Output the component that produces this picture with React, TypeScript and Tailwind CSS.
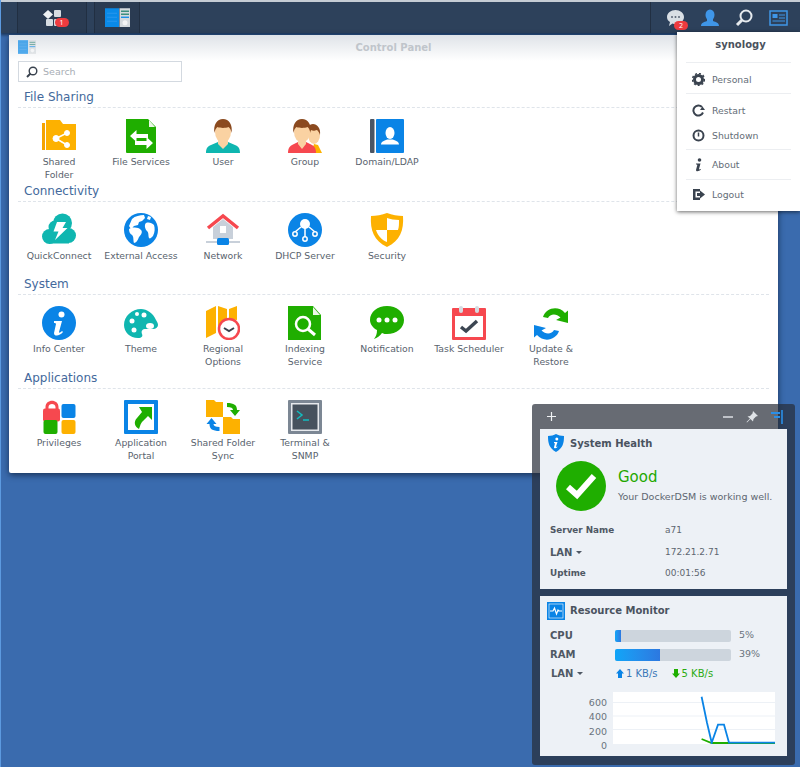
import React from "react";

const G = "#1fae00", O = "#fdb100", B = "#0a84e6", T = "#0fb6b0", R = "#f6484f";

function S({ children, size = 34, box = 34 }: { children: React.ReactNode; size?: number; box?: number }) {
  return <svg width={size} height={size} viewBox={`0 0 ${box} ${box}`} className="block">{children}</svg>;
}

const person = (shirt: string, dx = 0) => (
  <g transform={`translate(${dx} 0)`}>
    <path d="M0 34c0-5 2-7 5-8l7-3h10l7 3c3 1 5 3 5 8z" fill={shirt} />
    <path d="M12 21h10v4l-5 5-5-5z" fill="#fad2a2" />
    <ellipse cx="17" cy="13" rx="8" ry="10.500" fill="#fad2a2" />
    <path d="M8.500 14C7 6 11 0 17 0s10 6 8.500 14c-.5-3-1.500-5-3-6-3 1.200-8 1.200-11 0-1.500 1-2.500 3-3 6z" fill="#8b4a1f" />
  </g>
);

const icons: Record<string, React.ReactNode> = {
  shared: (
    <S>
      <path d="M0 4h3v27H0z" fill="#f5a300" /><path d="M4 1h14l3 4h13v26H4z" fill={O} />
      <g fill="#fff" stroke="#fff"><circle cx="25" cy="14" r="2.500" /><circle cx="25" cy="26" r="2.500" /><circle cx="14" cy="19.500" r="3" /><path d="M14 19.500 25 14M14 19.500 25 26" strokeWidth="1.500" /></g>
    </S>
  ),
  file: (
    <S>
      <path d="M2 0h22l8 8v26H3a1 1 0 0 1-1-1z" fill={G} />
      <path d="M25 1l6 7h-6z" fill="#eaf7e5" />
      <path d="M6 17l6.500-6v4H24v4H12.500v4z" fill="#fff" />
      <path d="M29 24l-6.500-6v4H11v4h11.500v4z" fill="#fff" />
    </S>
  ),
  user: <S>{person(T)}</S>,
  group: (
    <S>
      <g transform="translate(17 4)">
        <ellipse cx="9" cy="12" rx="6" ry="9" fill="#fad2a2" />
        <path d="M2 12C1 5 4 1 8 1s8 4 7 11c-1-3-2-4-3-5-3 1-4 1-6 0-1 1-3 3-4 5z" fill="#8b4a1f" />
        <path d="M6 30l3-9 4 1 4 8z" fill={O} />
      </g>
      <path d="M0 34c0-5 2-7 4-8l6-3h8l6 3c2 1 4 3 4 8z" fill={R} />
      <path d="M10 21h8v4l-4 5-4-5z" fill="#fad2a2" />
      <ellipse cx="14" cy="13" rx="8" ry="10.500" fill="#fad2a2" />
      <path d="M5.500 14C4 6 8 0 14 0s10 6 8.500 14c-.5-3-1.500-5-3-6-3 1.200-8 1.200-11 0-1.500 1-2.500 3-3 6z" fill="#8b4a1f" />
    </S>
  ),
  domain: (
    <S>
      <rect x="0" y="0" width="4.500" height="34" rx="1" fill="#4b5563" />
      <rect x="6" y="0" width="28" height="34" rx="1" fill={B} />
      <g fill="#fff"><ellipse cx="20" cy="14" rx="4.500" ry="6" /><path d="M11 25.500c0-3 4-4 6-5h6c2 1 6 2 6 5z" /></g>
    </S>
  ),
  quick: (
    <S>
      <g fill={T}>
        <circle cx="7.500" cy="23.500" r="7.500" /><circle cx="13" cy="14" r="6.500" /><circle cx="20.500" cy="10" r="9.500" /><circle cx="26.500" cy="22.500" r="7.500" /><rect x="7" y="18" width="20" height="12.500" />
      </g>
      <path d="M15 9h9l-3.500 6h5L13 27l3.500-8.500H11.500z" fill="#fff" />
    </S>
  ),
  external: (
    <S>
      <circle cx="17" cy="17" r="17" fill={B} />
      <path d="M8 6c3-3 8-4 12-4l1 3-3 3-3 1-1 3-4 1-3 3-2-3zM5 16c4-2 9-2 12 1 2 2 0 5-2 7-1 3-3 6-5 6-1-3 0-6-2-8-2-1-3-3-3-6zM22 10c3-1 6 0 8 2 1 3 1 7-1 11-2 2-3 3-4 2-1-3 0-5-2-7-2-2-3-6-1-8zM24 3l3 1-1 3-3-1z" fill="#fff" />
    </S>
  ),
  network: (
    <S>
      <path d="M7 14 17 6l10 8v12H7z" fill="#c8d0da" />
      <rect x="14" y="13" width="6" height="7" fill="#fff" />
      <path d="M2 15 17 3l15 12" fill="none" stroke={R} strokeWidth="3.500" />
      <rect x="0" y="28" width="34" height="2" fill="#c8d0da" />
      <rect x="11" y="25" width="12" height="7" rx="1.500" fill={B} />
    </S>
  ),
  dhcp: (
    <S>
      <circle cx="17" cy="17" r="17" fill={B} />
      <circle cx="17" cy="11" r="5" fill="#fff" />
      <g fill="none" stroke="#fff" strokeWidth="1.500"><path d="M17 15v10M13 14l-6 5M21 14l6 5" /><circle cx="7" cy="21" r="2.200" fill={B} /><circle cx="17" cy="26" r="2.200" fill={B} /><circle cx="27" cy="21" r="2.200" fill={B} /></g>
    </S>
  ),
  security: (
    <S>
      <path d="M1 3c5 0 11-1 16-3 5 2 11 3 16 3 1 14-3 25-16 31C4 28 0 17 1 3z" fill={O} />
      <path d="M17 5c3 1 8 2 12 2 0 4 0 7-1 10H17zM17 17v12c-5-2-9-6-11-12z" fill="#fff" />
    </S>
  ),
  info: (
    <S>
      <circle cx="17" cy="17" r="17" fill={B} />
      <circle cx="19.500" cy="8.500" r="3" fill="#fff" />
      <path d="M12 15h8l-3 11c0 1 1 1 3-1l1 1c-3 4-9 5-9 1l2-9c0-1-1-1-2-1z" fill="#fff" />
    </S>
  ),
  theme: (
    <S>
      <path d="M17 2C8 2 0 9 0 18c0 7 6 13 14 13 4 0 5-2 4-4-1-3 0-5 4-5h7c3 0 5-2 5-4 0-2-1-3-2-5C29 6 23 2 17 2z" fill={T} transform="translate(0 1)" />
      <g fill="#fff"><circle cx="8" cy="15" r="2.500" /><circle cx="13" cy="8" r="2" /><circle cx="20" cy="9" r="2.500" /><circle cx="10" cy="24" r="2.500" /><ellipse cx="26" cy="20" rx="4" ry="3" /></g>
    </S>
  ),
  regional: (
    <S>
      <path d="M0 5l10-5v27L0 32zM12 0l9 3v12l-9 6zM23 3l8-3v14l-8-1z" fill={O} />
      <circle cx="23" cy="23" r="10" fill="#fff" stroke={R} strokeWidth="2.500" />
      <path d="M18 22l5 3 5-3" fill="none" stroke="#39424e" strokeWidth="2" />
    </S>
  ),
  indexing: (
    <S>
      <path d="M0 0h25l8 9v25H0z" fill={G} />
      <path d="M25 1l7 8h-7z" fill="#eaf7e5" />
      <circle cx="15" cy="18" r="7" fill="none" stroke="#fff" strokeWidth="2.500" />
      <path d="M20 23l7 6" stroke="#fff" strokeWidth="3" />
    </S>
  ),
  notify: (
    <S>
      <path d="M17 0c9.500 0 17 6 17 14s-7.500 14-17 14c-2 0-3 0-5-1-2 3-5 5-8 6 2-3 3-5 3-9C3 22 0 18 0 14 0 6 7.500 0 17 0z" fill={G} />
      <g fill="#fff"><circle cx="9" cy="14" r="2.500" /><circle cx="17" cy="14" r="2.500" /><circle cx="25" cy="14" r="2.500" /></g>
    </S>
  ),
  task: (
    <S>
      <rect x="0" y="2" width="34" height="32" rx="1" fill={R} />
      <rect x="3" y="10" width="28" height="21" fill="#fff" />
      <rect x="7" y="0" width="4" height="7" rx="2" fill="#d5dae0" /><rect x="23" y="0" width="4" height="7" rx="2" fill="#d5dae0" />
      <path d="M9 21l5 4 11-10" fill="none" stroke="#3c4652" strokeWidth="3.500" />
    </S>
  ),
  update: (
    <S>
      <path d="M6 12C9 3 21 0 28 8l3-2.500V18l-12-3 4.500-2.500C19 8 13 9 11 13z" fill={G} transform="translate(3 -1)" />
      <path d="M28 22c-3 9-15 12-22 4l-3 2.500V16l12 3-4.500 2.500C15 26 21 25 23 21z" fill={B} transform="translate(-3 3)" />
    </S>
  ),
  priv: (
    <S>
      <path d="M3.500 10V7c0-8.500 13-8.500 13 0v3h-3V7c0-4-7-4-7 0v3z" fill={R} />
      <rect x="1" y="8.500" width="17" height="13" rx="2" fill={R} />
      <rect x="19.500" y="4" width="14" height="14" rx="2" fill={B} />
      <rect x="1.500" y="20" width="14" height="14" rx="2" fill={G} />
      <rect x="19.500" y="20" width="14" height="14" rx="2" fill={O} />
    </S>
  ),
  portal: (
    <S>
      <rect x="0" y="0" width="34" height="34" rx="1" fill={B} />
      <rect x="4" y="4" width="26" height="26" fill="#fff" />
      <path d="M15 7h13v13l-4-4-5 5c-3 3-3 6-4 8-4-2-6-7-2-11l5-6z" fill={G} />
    </S>
  ),
  sync: (
    <S>
      <path d="M0 0h8l2 2h7v15H0z" fill={O} />
      <path d="M17 17h8l2 2h7v15H17z" fill={O} />
      <path d="M21 3c7 0 10 2 10 7h3l-5 6-5-6h3c0-2-2-3-6-3z" fill={G} />
      <path d="M14 31c-7 0-10-2-10-7H1l5-6 5 6H8c0 2 2 3 6 3z" fill={B} transform="translate(-.5 0)" />
    </S>
  ),
  terminal: (
    <S>
      <rect x="0" y="0" width="34" height="34" rx="1" fill="#7c8794" />
      <rect x="3" y="3" width="28" height="28" fill="#e6e9ed" />
      <rect x="4.500" y="4.500" width="25" height="25" fill="#46515d" />
      <path d="M9 11l5 4-5 4" fill="none" stroke="#12bdc0" strokeWidth="1.500" /><path d="M15 20h6" stroke="#12bdc0" strokeWidth="1.500" />
    </S>
  ),
};

const sections: { title: string; items: [string, string][] }[] = [
  { title: "File Sharing", items: [["shared", "Shared\nFolder"], ["file", "File Services"], ["user", "User"], ["group", "Group"], ["domain", "Domain/LDAP"]] },
  { title: "Connectivity", items: [["quick", "QuickConnect"], ["external", "External Access"], ["network", "Network"], ["dhcp", "DHCP Server"], ["security", "Security"]] },
  { title: "System", items: [["info", "Info Center"], ["theme", "Theme"], ["regional", "Regional\nOptions"], ["indexing", "Indexing\nService"], ["notify", "Notification"], ["task", "Task Scheduler"], ["update", "Update &\nRestore"]] },
  { title: "Applications", items: [["priv", "Privileges"], ["portal", "Application\nPortal"], ["sync", "Shared Folder\nSync"], ["terminal", "Terminal &\nSNMP"]] },
];

function CpIcon({ size, faded }: { size: number; faded?: boolean }) {
  return (
    <svg width={size} height={size * 0.78} viewBox="0 0 25 19" className={faded ? "block opacity-70" : "block"}>
      <rect width="14" height="19" fill="#0a8ae8" />
      <rect x="14.500" width="10.500" height="19" fill="#d5dade" />
      <path d="M16 3h8M16 6h8" stroke="#3c8f7e" strokeWidth="1.300" />
      <path d="M16 9h8" stroke="#0a8ae8" strokeWidth="1.300" />
      <circle cx="20" cy="14.500" r="2.500" fill="#f4f5f6" />
      <path d="M2 5h10M2 9h10M2 13h10" stroke="#2a97ec" strokeWidth="1" />
    </svg>
  );
}

function Taskbar() {
  return (
    <div className="flex h-[33px] items-stretch border-t-2 border-[#c5ccd4] bg-[#2d415b] shadow-[0_2px_3px_rgba(0,0,0,0.5)]">
      <div className="ml-[17px] flex w-[70px] items-center justify-center border-x border-[#212f42] bg-[#2a3b52] pl-[5px]">
        <div className="relative">
          <svg width="24" height="20" viewBox="0 0 24 20" className="block">
            <path d="M5 0l5 4.500-5 4.500-5-4.500z" fill="#eef1f4" transform="translate(0 2)" />
            <rect x="11" y="2" width="7" height="7" rx="1" fill="#d6dce2" />
            <rect x="3" y="11" width="7" height="7" rx="1" fill="#d6dce2" />
            <rect x="11" y="11" width="7" height="7" rx="1" fill="#d6dce2" />
          </svg>
          <span className="absolute left-[12px] top-[10px] flex h-[9px] w-[14px] items-center justify-center rounded-full bg-[#ee3b3f] text-[7px] leading-none text-white">1</span>
        </div>
      </div>
      <div className="ml-[7px] flex w-[46px] items-center justify-center border-x border-[#212f42] bg-[#2a3b52]">
        <CpIcon size={25} />
      </div>
      <div className="ml-auto flex items-center gap-[16px] border-l border-[#212f42] pl-[15px] pr-[12px]">
        <div className="relative">
          <svg width="19" height="18" viewBox="0 0 19 18" className="block">
            <path d="M9.500 1C14 1 18 4 18 8s-4 7-8.500 7c-1 0-2 0-3-.5L3 17l1-4C2 12 1 10 1 8c0-4 4-7 8.500-7z" fill="#d9dfe5" />
            <g fill="#5a6676"><circle cx="6" cy="8" r="1" /><circle cx="9.500" cy="8" r="1" /><circle cx="13" cy="8" r="1" /></g>
          </svg>
          <span className="absolute left-[8px] top-[12px] flex h-[9px] w-[14px] items-center justify-center rounded-full bg-[#ee3b3f] text-[7px] leading-none text-white">2</span>
        </div>
        <svg width="18" height="18" viewBox="0 0 18 18" className="block">
          <ellipse cx="9" cy="6" rx="4.500" ry="5.500" fill="#3f96e8" />
          <path d="M0 17c0-3 3-4 6-5v-2h6v2c3 1 6 2 6 5z" fill="#3f96e8" />
        </svg>
        <svg width="18" height="18" viewBox="0 0 18 18" className="block">
          <circle cx="11" cy="7" r="5.500" fill="none" stroke="#e6eaee" strokeWidth="2" />
          <path d="M7 11l-5 5" stroke="#e6eaee" strokeWidth="3" />
        </svg>
        <svg width="19" height="16" viewBox="0 0 19 16" className="block">
          <rect x="1" y="1" width="17" height="14" fill="none" stroke="#3f96e8" strokeWidth="1.500" />
          <rect x="3.500" y="4" width="5" height="4" fill="#3f96e8" />
          <path d="M10 5h6M10 8h6M3.500 11h12.500" stroke="#3f96e8" strokeWidth="1.200" />
        </svg>
      </div>
    </div>
  );
}

function ControlPanel() {
  return (
    <div className="absolute left-[9px] top-[35px] h-[438px] w-[769px] rounded-[2px] bg-white font-['DejaVu_Sans',sans-serif] shadow-[0_2px_6px_rgba(10,25,50,0.7)]">
      <div className="relative h-[26px] bg-gradient-to-b from-[#dfe3e8] to-white pl-[9px] pt-[5px]">
        <CpIcon size={18} faded />
        <div className="absolute inset-x-0 top-[7px] text-center text-[10px] font-bold leading-3 text-[#c0c5cb]">Control Panel</div>
      </div>
      <div className="ml-[9px] flex h-[21px] w-[164px] items-center gap-[5px] border border-[#d3d9e0] bg-white pl-[7px]">
        <svg width="12" height="12" viewBox="0 0 12 12" className="block">
          <circle cx="7" cy="5" r="3.800" fill="none" stroke="#39424e" strokeWidth="1.400" />
          <path d="M4.500 7.500 1 11" stroke="#39424e" strokeWidth="2" />
        </svg>
        <span className="text-[9.500px] leading-3 text-[#a8aeb5]">Search</span>
      </div>
      <div className="mt-[8px] px-[9px]">
        {sections.map((s) => (
          <div key={s.title} className="h-[93.700px]">
            <div className="h-[18px] border-b border-dashed border-[#dfe4ea] pl-[6px] text-[12px] leading-[15px] text-[#43699c]">{s.title}</div>
            <div className="mt-[11px] flex">
              {s.items.map(([k, label]) => (
                <div key={k} className="flex w-[82px] flex-col items-center">
                  {icons[k]}
                  <div className="mt-[3px] w-[82px] whitespace-pre-line text-center text-[9.300px] leading-[12.500px] text-[#59636e]">{label}</div>
                </div>
              ))}
            </div>
          </div>
        ))}
      </div>
    </div>
  );
}

function MenuRow({ icon, label }: { icon: React.ReactNode; label: string }) {
  return (
    <div className="flex h-[25px] items-center gap-[7px] pl-[5px]">
      <span className="flex w-[14px] justify-center">{icon}</span>
      <span className="text-[9.300px] text-[#646d77]">{label}</span>
    </div>
  );
}

function UserMenu() {
  const c = "#3a434f";
  return (
    <div className="absolute right-0 top-[32px] h-[179px] w-[123px] bg-white px-[9px] font-['DejaVu_Sans',sans-serif] shadow-[0_1px_4px_rgba(0,0,0,0.6)]">
      <div className="flex h-[31px] items-center justify-center border-b border-[#eceef1] pb-[6px] pl-[4px] text-[10px] font-bold text-[#4a525d]">synology</div>
      <div className="border-b border-[#eceef1] pb-[1px] pt-[4px]">
        <MenuRow label="Personal" icon={<svg width="13" height="13" viewBox="0 0 13 13"><circle cx="6.500" cy="6.500" r="4" fill="none" stroke={c} strokeWidth="3" /><circle cx="6.500" cy="6.500" r="6" fill="none" stroke={c} strokeWidth="1.500" strokeDasharray="2 2" /></svg>} />
      </div>
      <div className="border-b border-[#eceef1] pb-[1px] pt-[4px]">
        <MenuRow label="Restart" icon={<svg width="13" height="13" viewBox="0 0 13 13"><path d="M11 8.500A5 5 0 1 1 10 3" fill="none" stroke={c} strokeWidth="2" /><path d="M8 6h5l-2.500-3.500z" fill={c} /></svg>} />
        <MenuRow label="Shutdown" icon={<svg width="13" height="13" viewBox="0 0 13 13"><circle cx="6.500" cy="6.500" r="5" fill="none" stroke={c} strokeWidth="2" /><path d="M6.500 3.500v4" stroke={c} strokeWidth="1.500" /></svg>} />
      </div>
      <div className="border-b border-[#eceef1] py-[2px]">
        <MenuRow label="About" icon={<svg width="9" height="14" viewBox="0 0 9 14"><circle cx="5.500" cy="2" r="1.800" fill={c} /><path d="M2 5.500h4.500L5 11c0 .6.5.6 1.500 0l.5.6C5 13.500 2 14 2 12l1.300-5c0-.4-.5-.5-1.300-.5z" fill={c} /></svg>} />
      </div>
      <div className="py-[2px]">
        <MenuRow label="Logout" icon={<svg width="13" height="13" viewBox="0 0 13 13"><path d="M8 1H1v11h7v-2.500H3.500v-6H8z" fill={c} /><path d="M5 5h3V2.500l5 4-5 4V8H5z" fill={c} /></svg>} />
      </div>
    </div>
  );
}

function Info({ label, value, caret }: { label: string; value: string; caret?: boolean }) {
  return (
    <div className="flex h-[21.500px] items-center pl-[10px]">
      <div className="flex w-[115px] items-center gap-[4px] text-[8.800px] font-bold text-[#4f5864]">
        <span className={caret ? "text-[10px]" : ""}>{label}</span>
        {caret && <span className="mt-[1px] h-0 w-0 border-x-[3px] border-t-[3px] border-x-transparent border-t-[#4f5864]" />}
      </div>
      <div className="text-[9px] text-[#5d6670]">{value}</div>
    </div>
  );
}

function Bar({ label, pct, text }: { label: string; pct: number; text: string }) {
  return (
    <div className="flex h-[19px] items-center pl-[10px]">
      <div className="w-[65px] text-[10px] font-bold text-[#4f5864]">{label}</div>
      <div className="h-[12px] w-[116px] overflow-hidden rounded-[2px] bg-[#cdd5dd]">
        <div className="h-full bg-gradient-to-r from-[#0ea5f8] to-[#2c78e0]" style={{ width: `${pct}%` }} />
      </div>
      <div className="ml-[8px] text-[9.500px] text-[#6a737d]">{text}</div>
    </div>
  );
}

function Widget() {
  return (
    <div className="absolute left-[532px] top-[404px] h-[361px] w-[263px] rounded-[3px] bg-[rgba(38,44,56,0.7)] px-[8px] font-['DejaVu_Sans',sans-serif]">
      <div className="flex h-[25px] items-center justify-between pl-[6px] pr-[4px]">
        <svg width="11" height="11" viewBox="0 0 11 11"><path d="M5.500 1v9M1 5.500h9" stroke="#f0f2f4" strokeWidth="1.200" /></svg>
        <div className="flex items-center gap-[13px]">
          <svg width="10" height="10" viewBox="0 0 10 10"><path d="M0 5h10" stroke="#e6e9ec" strokeWidth="1.400" /></svg>
          <svg width="12" height="12" viewBox="0 0 12 12"><path d="M7 0l5 5-2 .5-2.500 2.500-.5 2.500L4.500 8 1 11.500 0.500 11 4 7.500 1.500 5.500 4 5l2.500-2.500z" fill="#dfe3e7" /></svg>
          <svg width="12" height="14" viewBox="0 0 12 14"><path d="M0 3h9M3 7h6" stroke="#2a8fe8" strokeWidth="2" /><path d="M11 0v14" stroke="#2a8fe8" strokeWidth="1.600" /></svg>
        </div>
      </div>
      <div className="h-[160px] bg-[#edf1f6]">
        <div className="flex h-[28px] items-center gap-[6px] pl-[8px]">
          <svg width="16" height="18" viewBox="0 0 16 18"><path d="M8 0c2 1 5 2 8 2 0 7-1 12-8 16C1 14 0 9 0 2c3 0 6-1 8-2z" fill={B} /><circle cx="8.800" cy="5" r="1.500" fill="#fff" /><path d="M6 8h3.500L8 12.500c0 .6.500.5 1.200 0l.3.500c-1.500 1.500-3.500 1.700-3.500.2L7 9.300H6z" fill="#fff" /></svg>
          <span className="text-[10px] font-bold text-[#4a535f]">System Health</span>
        </div>
        <div className="flex h-[57px] items-center pl-[16px]">
          <svg width="50" height="50" viewBox="0 0 50 50"><circle cx="25" cy="25" r="25" fill={G} /><path d="M12 26l9 8 17-19" fill="none" stroke="#fff" strokeWidth="6" /></svg>
          <div className="ml-[12px]">
            <div className="text-[15px] leading-[18px] text-[#1fa800]">Good</div>
            <div className="mt-[5px] text-[9.500px] leading-3 text-[#5d6670]">Your DockerDSM is working well.</div>
          </div>
        </div>
        <div className="pt-[6px]">
          <Info label="Server Name" value="a71" />
          <Info label="LAN" value="172.21.2.71" caret />
          <Info label="Uptime" value="00:01:56" />
        </div>
      </div>
      <div className="mt-[7px] h-[160px] bg-[#edf1f6]">
        <div className="flex h-[30px] items-center gap-[5px] pb-[1px] pl-[7px]">
          <svg width="18" height="18" viewBox="0 0 18 18"><rect x="0.500" y="0.500" width="17" height="17" fill={B} stroke={B} /><rect x="2" y="2" width="14" height="14" fill="none" stroke="#fff" strokeWidth=".6" /><path d="M3 9h3l1.500-3L9.500 12l1.500-4 1 1h3" fill="none" stroke="#fff" strokeWidth="1.200" /></svg>
          <span className="text-[10px] font-bold text-[#4a535f]">Resource Monitor</span>
        </div>
        <Bar label="CPU" pct={5} text="5%" />
        <Bar label="RAM" pct={39} text="39%" />
        <div className="flex h-[19px] items-center">
          <div className="flex w-[75px] items-center gap-[4px] pl-[11px] text-[10px] font-bold text-[#4f5864]">
            LAN<span className="h-0 w-0 border-x-[3px] border-t-[3px] border-x-transparent border-t-[#4f5864]" />
          </div>
          <div className="flex items-center gap-[14px] pl-[1px] text-[10px]">
            <span className="flex items-center gap-[2px] text-[#3a78b8]"><svg width="8" height="9" viewBox="0 0 8 9"><path d="M4 0l4 4.500H6V9H2V4.500H0z" fill={B} /></svg>1 KB/s</span>
            <span className="flex items-center gap-[2px] text-[#2cab12]"><svg width="8" height="9" viewBox="0 0 8 9"><path d="M4 9L0 4.500h2V0h4v4.500h2z" fill={G} /></svg>5 KB/s</span>
          </div>
        </div>
        <div className="mt-[9px] flex">
          <div className="flex h-[60px] w-[73px] flex-col items-end justify-between pr-[6px] pt-[5px] text-[9.500px] leading-[12px] text-[#6a737d]">
            <span>600</span><span>400</span><span>200</span><span>0</span>
          </div>
          <svg width="162" height="52" viewBox="0 0 162 52" className="block">
            <rect width="162" height="52" fill="#fff" />
            <path d="M0 10.500h162M0 24h162M0 37.500h162" stroke="#edf1f6" />
            <path d="M88.600 47l10 4h63.400" fill="none" stroke={G} strokeWidth="1.800" />
            <path d="M88.600 4.700l5.400 26 4.700 20 6.300-18h6l5 18h46" fill="none" stroke={B} strokeWidth="1.800" />
          </svg>
        </div>
      </div>
    </div>
  );
}

export default function App() {
  return (
    <div className="relative h-[767px] w-[800px] overflow-hidden border-l border-[#5c9ae0] bg-[#3a6bae]">
      <div className="-ml-px">
        <Taskbar />
      </div>
      <div className="absolute -left-px top-0">
        <ControlPanel />
        <Widget />
      </div>
      <UserMenu />
    </div>
  );
}
